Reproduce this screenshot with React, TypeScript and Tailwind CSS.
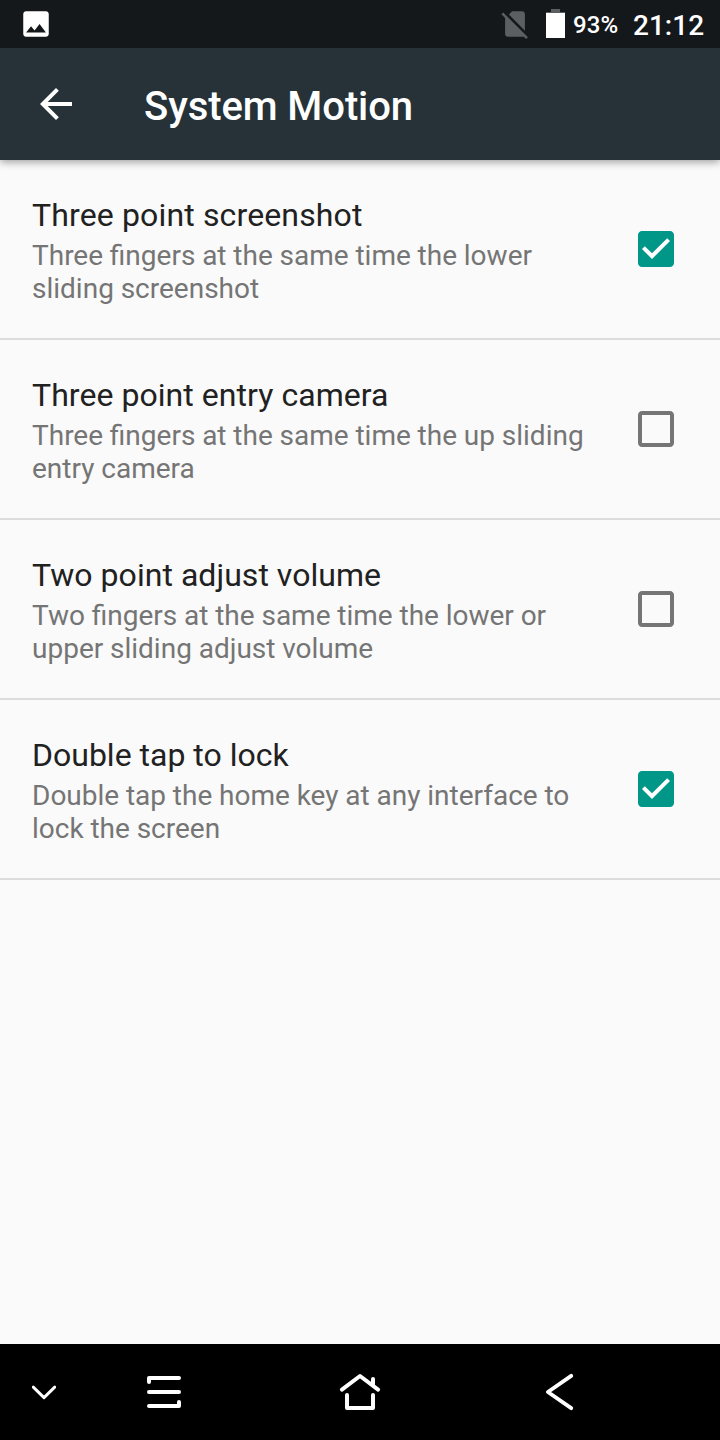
const items = [
  { title: 'Three point screenshot', tracking: 'tracking-[0.14px]', lines: ['Three fingers at the same time the lower', 'sliding screenshot'], on: true },
  { title: 'Three point entry camera', tracking: 'tracking-[0.05px]', lines: ['Three fingers at the same time the up sliding', 'entry camera'], on: false },
  { title: 'Two point adjust volume', tracking: 'tracking-[0.04px]', lines: ['Two fingers at the same time the lower or', 'upper sliding adjust volume'], on: false },
  { title: 'Double tap to lock', tracking: 'tracking-normal', lines: ['Double tap the home key at any interface to', 'lock the screen'], on: true },
];

function CheckBox({ on }: { on: boolean }) {
  return (
    <svg viewBox="0 0 24 24" className={on ? 'size-12 shrink-0 fill-[#009688]' : 'size-12 shrink-0 fill-[#757575]'}>
      {on ? (
        <>
          <path d="M7 8 12 5 18 5 20 7 20 15 12 19 4 13z" fill="#fff" />
          <path d="M19 3H5c-1.11 0-2 .9-2 2v14c0 1.1.89 2 2 2h14c1.11 0 2-.9 2-2V5c0-1.1-.89-2-2-2zm-9 14l-5-5 1.41-1.41L10 14.17l7.59-7.59L19 8l-9 9z" />
        </>
      ) : (
        <path d="M19 5v14H5V5h14m0-2H5c-1.1 0-2 .9-2 2v14c0 1.1.9 2 2 2h14c1.1 0 2-.9 2-2V5c0-1.1-.9-2-2-2z" />
      )}
    </svg>
  );
}

function StatusBar() {
  return (
    <div className="flex h-12 shrink-0 items-start bg-[#14181b] pr-4 pl-[19px] font-medium text-white">
      <svg viewBox="0 0 24 24" className="mt-[7px] size-[34px] fill-white">
        <path d="M21 19V5c0-1.1-.9-2-2-2H5c-1.1 0-2 .9-2 2v14c0 1.1.9 2 2 2h14c1.1 0 2-.9 2-2zM8.5 13.5l2.5 3.01L14.5 12l4.5 6H5l3.5-4.5z" />
      </svg>
      <div className="flex-1" />
      <svg viewBox="0 0 24 24" className="mt-[7px] size-[34px] fill-[#5c5f61]">
        <path d="M18.99 5c0-1.1-.89-2-1.99-2h-7L7.66 5.34 19 16.68 18.99 5zM3.65 3.88L2.38 5.15 5 7.77V19c0 1.1.9 2 2 2h10.01c.35 0 .67-.1.96-.26l1.88 1.88 1.27-1.27L3.65 3.88z" />
      </svg>
      <svg viewBox="0 0 19 29" className="mt-[9px] ml-3.5 h-[29px] w-[19px]">
        <path d="M5 0h9v3h5v3H0V3h5z" fill="#5c5f61" />
        <path d="M0 4h19v25H0z" fill="#fff" />
      </svg>
      <div className="mt-[11px] ml-2 w-[60px] text-[24px] leading-[28px] tracking-[0.15px] whitespace-nowrap">93%</div>
      <div className="mt-[9px] w-[71px] text-[28px] leading-[33px] whitespace-nowrap">21:12</div>
    </div>
  );
}

function NavBar() {
  return (
    <div className="flex h-24 shrink-0 items-center bg-black pl-8">
      <svg viewBox="32 1380 24 24" className="size-6" fill="none" stroke="#fff" strokeWidth="2.9" strokeLinecap="round" strokeLinejoin="round">
        <path d="M33.3 1387.1 44 1397.6 54.7 1387.1" />
      </svg>
      <svg viewBox="144 1372 40 40" className="ml-[88px] size-10" fill="none" stroke="#fff" strokeWidth="4" strokeLinecap="round" strokeLinejoin="round">
        <path d="M149 1382V1378H179M149 1392H179M149 1406H179V1402" />
      </svg>
      <svg viewBox="338 1370 44 44" className="ml-[154px] size-11" fill="none" stroke="#fff" strokeWidth="4" strokeLinecap="round" strokeLinejoin="round">
        <path d="M341.9 1389.6 360 1376 378.1 1389.6M373 1379V1385.5M347 1395V1408H373V1395" />
      </svg>
      <svg viewBox="540 1372 40 40" className="ml-[158px] size-10" fill="none" stroke="#fff" strokeWidth="3.9" strokeLinecap="round" strokeLinejoin="round">
        <path d="M571.2 1375.9 547.9 1392 571.2 1408.1" />
      </svg>
    </div>
  );
}

export default function App() {
  return (
    <div className="flex h-[1440px] w-[720px] flex-col overflow-hidden bg-[#fafafa] font-['Roboto',sans-serif]">
      <StatusBar />
      <header className="z-10 flex h-28 shrink-0 items-start bg-[#263238] pl-8 text-white shadow-[0_2px_8px_rgba(0,0,0,0.38)] [clip-path:inset(0_0_-16px_0)]">
        <svg viewBox="0 0 24 24" className="mt-8 size-12 fill-white">
          <path d="M20 11H7.83l5.59-5.59L12 4l-8 8 8 8 1.41-1.41L7.83 13H20v-2z" />
        </svg>
        <h1 className="mt-[35px] ml-16 text-[40px] leading-[48px] font-medium tracking-[-0.08px]">System Motion</h1>
      </header>
      <main className="flex-1">
        {items.map((item) => (
          <div key={item.title} className="flex h-[180px] items-center justify-between border-b-2 border-[#dcdcdc] pr-10 pl-8">
            <div className="h-[106px] whitespace-nowrap">
              <div className={`text-[32px] leading-[38px] text-[#212121] ${item.tracking}`}>{item.title}</div>
              <div className="mt-[5px] text-[28px] leading-[33px] text-[#757575] [word-spacing:-0.15px]">
                {item.lines.map((line) => (
                  <div key={line}>{line}</div>
                ))}
              </div>
            </div>
            <CheckBox on={item.on} />
          </div>
        ))}
      </main>
      <NavBar />
    </div>
  );
}
